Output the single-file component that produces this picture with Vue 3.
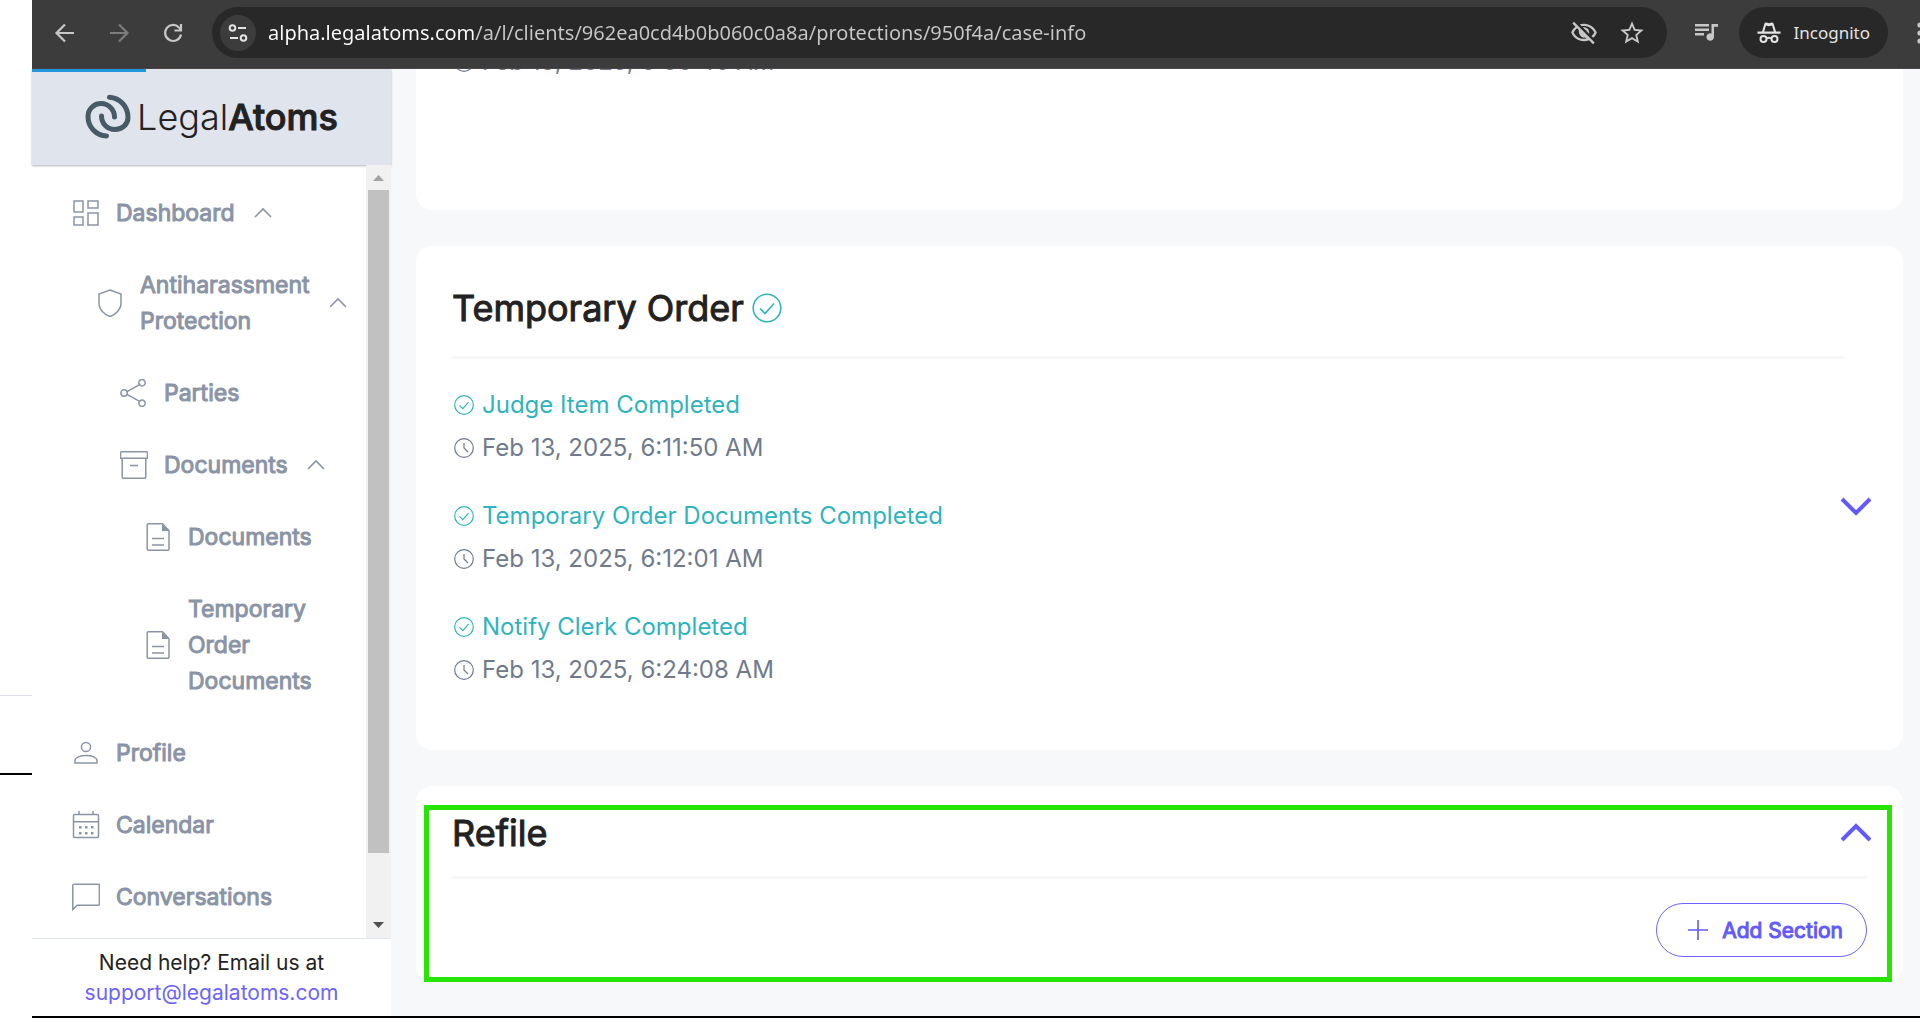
<script setup>
import { computed, ref } from 'vue'

const address = ref('alpha.legalatoms.com/a/l/clients/962ea0cd4b0b060c0a8a/protections/950f4a/case-info')

const navItems = [
  { id: 'dashboard', label: 'Dashboard', icon: 'grid', level: 0, expandable: true },
  { id: 'antiharassment', label: 'Antiharassment Protection', icon: 'shield', level: 1, expandable: true, parent: 'dashboard' },
  { id: 'parties', label: 'Parties', icon: 'share', level: 2, parent: 'antiharassment' },
  { id: 'documents', label: 'Documents', icon: 'archive', level: 2, expandable: true, parent: 'antiharassment' },
  { id: 'all-documents', label: 'Documents', icon: 'file', level: 3, parent: 'documents' },
  { id: 'temporary-order', label: 'Temporary Order Documents', icon: 'file', level: 3, parent: 'documents' },
  { id: 'profile', label: 'Profile', icon: 'user', level: 0 },
  { id: 'calendar', label: 'Calendar', icon: 'calendar', level: 0 },
  { id: 'conversations', label: 'Conversations', icon: 'chat', level: 0 }
]

const collapsed = ref([])

const isHidden = (item) => {
  if (!item.parent) return false
  if (collapsed.value.includes(item.parent)) return true
  return isHidden(navItems.find((other) => other.id === item.parent))
}

const visibleItems = computed(() => navItems.filter((item) => !isHidden(item)))

const toggleItem = (item) => {
  if (!item.expandable) return
  collapsed.value = collapsed.value.includes(item.id)
    ? collapsed.value.filter((id) => id !== item.id)
    : [...collapsed.value, item.id]
}

const steps = [
  { title: 'Judge Item Completed', date: 'Feb 13, 2025, 6:11:50 AM' },
  { title: 'Temporary Order Documents Completed', date: 'Feb 13, 2025, 6:12:01 AM' },
  { title: 'Notify Clerk Completed', date: 'Feb 13, 2025, 6:24:08 AM' }
]

// 28x28 stroke icons for the sidebar
const iconPaths = {
  grid: 'M2 2h9v11h-9z M16 2h10v7h-10z M2 18h9v8h-9z M16 14h10v12h-10z',
  shield: 'M14 1 L25 5 V14 C25 21 19 26 14 27.500 C9 26 3 21 3 14 V5 Z',
  share: 'M7.500 12.300 L20.500 5.200 M7.500 15.600 L20.500 22.800 M7.300 14a3.200 3.200 0 1 1-6.400 0a3.200 3.200 0 1 1 6.400 0 M25.200 3.700a3.200 3.200 0 1 1-6.400 0a3.200 3.200 0 1 1 6.400 0 M25.200 24.300a3.200 3.200 0 1 1-6.400 0a3.200 3.200 0 1 1 6.400 0',
  archive: 'M1.500 .700h25a1 1 0 0 1 1 1v5.600h-27v-5.600a1 1 0 0 1 1-1z M2.200 7.300v18.500a1.500 1.500 0 0 0 1.500 1.500h20.600a1.500 1.500 0 0 0 1.500-1.500v-18.500 M10 14.500h8',
  file: 'M4.500 .700h14l6.500 7v18.300a1.300 1.300 0 0 1-1.300 1.300h-19.200a1.300 1.300 0 0 1-1.300-1.300v-24a1.300 1.300 0 0 1 1.300-1.300z M8 15.500h12 M8 22h12',
  user: 'M18.600 8a4.600 4.600 0 1 1-9.200 0a4.600 4.600 0 1 1 9.200 0 M3 24v-2.500c0-3 5-5 11-5s11 2 11 5v2.500z',
  calendar: 'M2.500 3.500h23a1 1 0 0 1 1 1v21a1 1 0 0 1-1 1h-23a1 1 0 0 1-1-1v-21a1 1 0 0 1 1-1z M1.500 10.700h25 M7 0v3.500 M21 0v3.500',
  chat: 'M.800 26.500v-24a1.300 1.300 0 0 1 1.300-1.300h24a1.300 1.300 0 0 1 1.300 1.300v18.500a1.300 1.300 0 0 1-1.300 1.300h-21z'
}
</script>

<template>
  <div class="page">
    <div class="gutter">
      <span class="gutter-line thin"></span>
      <span class="gutter-line thick"></span>
    </div>

    <div class="window">
      <header class="browser-bar">
        <div class="bar-group">
          <button class="bar-btn" aria-label="Back">
            <svg viewBox="0 0 28 28"><path d="M23 14H6M14 5.500L5.500 14l8.500 8.500" /></svg>
          </button>
          <button class="bar-btn dim" aria-label="Forward">
            <svg viewBox="0 0 28 28"><path d="M5 14h17M14 5.500l8.500 8.500-8.500 8.500" /></svg>
          </button>
          <button class="bar-btn" aria-label="Reload">
            <svg viewBox="0 0 28 28"><path d="M22 15.500A8 8 0 1 1 20 8.500L22 10.500M22 5v6.500H15.500" /></svg>
          </button>
        </div>

        <div class="address">
          <button class="site-info" aria-label="Site information">
            <svg viewBox="0 0 36 36">
              <circle cx="12.500" cy="13" r="2.800" />
              <path d="M18 13h8M10 23h8" />
              <circle cx="23.500" cy="23" r="2.800" />
            </svg>
          </button>
          <input v-model="address" class="url" aria-label="Address" spellcheck="false" />
          <button class="bar-btn solid" aria-label="Third-party cookies blocked">
            <svg viewBox="0 0 24 24"><path d="M12 6c3.790 0 7.170 2.130 8.820 5.500-.590 1.220-1.420 2.270-2.410 3.120l1.410 1.410c1.390-1.230 2.490-2.770 3.180-4.530C21.270 7.110 17 4 12 4c-1.270 0-2.490.200-3.640.570l1.650 1.650C10.660 6.090 11.320 6 12 6zm-1.070 1.140L13 9.210c.570.250 1.030.710 1.280 1.280l2.070 2.070c.080-.340.140-.700.140-1.070C16.500 9.010 14.480 7 12 7c-.370 0-.720.050-1.070.140zM2.010 3.870l2.680 2.680C3.060 7.830 1.770 9.530 1 11.500 2.730 15.890 7 19 12 19c1.520 0 2.980-.290 4.320-.820l3.420 3.420 1.410-1.410L3.420 2.450 2.010 3.870zM12 17c-3.790 0-7.170-2.130-8.820-5.500.700-1.430 1.720-2.610 2.930-3.530l1.480 1.480c-.060.330-.090.690-.090 1.050 0 2.480 2.020 5.500 4.500 5.500.360 0 .720-.030 1.050-.100l.940.940C13.340 16.940 12.680 17 12 17z" /></svg>
          </button>
          <button class="bar-btn solid" aria-label="Bookmark">
            <svg viewBox="0 0 24 24"><path d="M22 9.240l-7.190-.620L12 2 9.190 8.630 2 9.240l5.460 4.730L5.820 21 12 17.270 18.180 21l-1.630-7.030L22 9.240zM12 15.400l-3.760 2.270 1-4.280-3.320-2.880 4.380-.380L12 6.100l1.710 4.040 4.380.380-3.320 2.880 1 4.280L12 15.400z" /></svg>
          </button>
        </div>

        <div class="bar-group right">
          <button class="bar-btn solid" aria-label="Media controls">
            <svg viewBox="0 0 28 28"><path d="M2 5h14v2.400H2zM2 9.500h14v2.400H2zM2 14h9v2.400H2zM18.500 5H25v2.800h-4V18a3.800 3.800 0 1 1-2.500-3.500z" /></svg>
          </button>
          <button class="incognito">
            <svg viewBox="0 0 24 24">
              <path class="hat" d="M7.500 2.500C8 1.300 9 1.300 12 2.300 15 1.300 16 1.300 16.500 2.500L19 10.500H23.500V12.700H.500V10.500H5zM9 4.500L7.200 10.500H16.800L15 4.500 12 5.300z" />
              <circle cx="6.500" cy="18" r="3" />
              <circle cx="17.500" cy="18" r="3" />
              <path d="M9.500 17.500Q12 16 14.500 17.500" />
            </svg>
            Incognito
          </button>
          <button class="kebab" aria-label="More">
            <svg viewBox="0 0 14 28">
              <circle cx="14" cy="6" r="2.600" />
              <circle cx="14" cy="14" r="2.600" />
              <circle cx="14" cy="22" r="2.600" />
            </svg>
          </button>
        </div>
      </header>

      <div class="app">
        <aside class="sidebar">
          <span class="progress"></span>
          <a class="brand" href="#">
            <svg viewBox="0 0 46 46">
              <path d="M24.500 3.200C35 4 43 12.500 43 23.500 43 30.500 37 35.500 30 35.500 22.500 35.500 16.500 30 16.500 22" />
              <path d="M21.500 42C11 41.500 3 33 3 22.500 3 15 9 9.500 16 9.500 23.500 9.500 29.500 15.500 29.500 23" />
            </svg>
            <span class="brand-name">Legal<b>Atoms</b></span>
          </a>

          <div class="nav-wrap">
            <nav class="nav">
              <component
                :is="item.expandable ? 'button' : 'a'"
                v-for="item in visibleItems"
                :key="item.id"
                :href="item.expandable ? null : `#${item.id}`"
                class="nav-item"
                :class="`level-${item.level}`"
                @click="toggleItem(item)"
              >
                <svg class="nav-icon" viewBox="0 0 28 28">
                  <path :d="iconPaths[item.icon]" />
                  <path v-if="item.icon === 'file'" class="filled" d="M18 1v7h7z" />
                  <path
                    v-if="item.icon === 'calendar'"
                    class="filled"
                    d="M7 15h2.500v2.500H7zM13 15h2.500v2.500H13zM19 15h2.500v2.500H19zM7 21h2.500v2.500H7zM13 21h2.500v2.500H13zM19 21h2.500v2.500H19z"
                  />
                </svg>
                <span class="nav-label">{{ item.label }}</span>
                <svg
                  v-if="item.expandable"
                  class="nav-chevron"
                  :class="{ closed: collapsed.includes(item.id) }"
                  viewBox="0 0 18 18"
                >
                  <path d="M1 13l8-8 8 8" />
                </svg>
              </component>
            </nav>
            <div class="scrollbar" aria-hidden="true">
              <svg class="arrow up" viewBox="0 0 25 25"><path d="M7 16l5.500-6 5.500 6z" /></svg>
              <div class="scroll-track"><div class="thumb"></div></div>
              <svg class="arrow down" viewBox="0 0 25 25"><path d="M7 9l5.500 6 5.500-6z" /></svg>
            </div>
          </div>

          <footer class="help">
            Need help? Email us at
            <a href="mailto:support@legalatoms.com">support@legalatoms.com</a>
          </footer>
        </aside>

        <main class="content">
          <section class="card previous">
            <p class="step-date">
              <svg class="step-icon" viewBox="0 0 20 20"><circle cx="10" cy="10" r="9.300" /><path d="M10 5v5l4 4" /></svg>
              Feb 13, 2025, 6:06:46 AM
            </p>
          </section>

          <section class="card order">
            <div class="card-body">
              <h2>
                Temporary Order
                <svg class="title-icon" viewBox="0 0 30 30"><circle cx="15" cy="15" r="13.800" /><path d="M8 15.500l5 5 9-10" /></svg>
              </h2>
              <hr />
              <div class="steps">
                <div v-for="step in steps" :key="step.title">
                  <p class="step-title">
                    <svg class="step-icon" viewBox="0 0 20 20"><circle cx="10" cy="10" r="9.300" /><path d="M5.500 10.300l3.300 3.300 5.700-6.500" /></svg>
                    {{ step.title }}
                  </p>
                  <p class="step-date">
                    <svg class="step-icon" viewBox="0 0 20 20"><circle cx="10" cy="10" r="9.300" /><path d="M10 5v5l4 4" /></svg>
                    {{ step.date }}
                  </p>
                </div>
              </div>
            </div>
            <button class="expand" aria-label="Expand Temporary Order">
              <svg viewBox="0 0 32 20"><path d="M2 3l14 14 14-14" /></svg>
            </button>
          </section>

          <section class="card refile">
            <div class="card-head">
              <h2>Refile</h2>
              <button class="expand" aria-label="Collapse Refile">
                <svg viewBox="0 0 32 20"><path d="M2 17l14-14 14 14" /></svg>
              </button>
            </div>
            <hr />
            <button class="add-btn">
              <svg viewBox="0 0 20 20"><path d="M10 0v20M0 10h20" /></svg>
              Add Section
            </button>
            <div class="highlight"></div>
          </section>
        </main>
      </div>
    </div>
  </div>
</template>

<style>
body {
  margin: 0;
  background: #fff;
}
</style>

<style scoped>
* {
  box-sizing: border-box;
}

.page {
  display: flex;
  height: 100vh;
  font-family: Inter, "Liberation Sans", sans-serif;
  color: #222;
  background: #fff;
}

button {
  padding: 0;
  border: none;
  background: none;
  font: inherit;
  cursor: pointer;
}

a {
  text-decoration: none;
}

svg {
  display: block;
  flex: none;
  fill: none;
  stroke: currentColor;
}

.gutter {
  display: flex;
  flex-direction: column;
  justify-content: flex-end;
  width: 32px;
  flex: none;
  padding-bottom: 243px;
}

.gutter-line.thin {
  height: 1px;
  margin-bottom: 77px;
  background: #dfe1ea;
}

.gutter-line.thick {
  height: 2px;
  background: #000;
}

.window {
  flex: 1;
  min-width: 0;
  display: flex;
  flex-direction: column;
  border-bottom: 2px solid #000;
}

.browser-bar {
  display: flex;
  align-items: center;
  gap: 26px;
  height: 69px;
  flex: none;
  padding: 0 0 3px 19px;
  background: #3c3c3c;
  border-bottom: 1px solid #4a4649;
}

.bar-group {
  display: flex;
  align-items: center;
  gap: 26px;
}

.bar-group.right {
  gap: 18px;
}

.bar-btn {
  color: #c7c7c7;
}

.bar-btn svg {
  width: 28px;
  height: 28px;
  stroke-width: 2.2;
}

.bar-btn.dim {
  color: #7c7c7c;
}

.bar-btn.solid svg {
  fill: currentColor;
  stroke: none;
}

.address {
  flex: 1;
  min-width: 0;
  display: flex;
  align-items: center;
  gap: 20px;
  height: 51px;
  margin-left: -1px;
  padding: 0 21px 0 8px;
  border-radius: 26px;
  background: #282828;
}

.site-info {
  border-radius: 50%;
  background: #3c3c3c;
  color: #e3e3e3;
}

.site-info svg {
  width: 36px;
  height: 36px;
  stroke-width: 2;
}

.url {
  flex: 1;
  min-width: 0;
  margin-left: -8px;
  padding: 0;
  border: none;
  outline: none;
  font-family: "Noto Sans", "Open Sans", sans-serif;
  font-size: 20px;
  line-height: 28px;
  color: transparent;
  background: linear-gradient(to right, #fff 206px, #c7c7c7 206px);
  background-clip: text;
}

.incognito {
  display: flex;
  align-items: center;
  gap: 13px;
  height: 51px;
  padding: 0 18px;
  border-radius: 26px;
  background: #282828;
  color: #e3e3e3;
  font-family: "Noto Sans", "Open Sans", sans-serif;
  font-size: 17px;
}

.incognito svg {
  width: 24px;
  height: 24px;
  stroke-width: 2;
}

.incognito .hat {
  fill: currentColor;
  fill-rule: evenodd;
  stroke: none;
}

.kebab {
  color: #c7c7c7;
}

.kebab svg {
  width: 14px;
  height: 28px;
  fill: currentColor;
  stroke: none;
}

.app {
  flex: 1;
  min-height: 0;
  display: flex;
}

.sidebar {
  position: relative;
  display: flex;
  flex-direction: column;
  width: 359px;
  flex: none;
  background: #fff;
}

.progress {
  position: absolute;
  top: 0;
  left: 0;
  width: 114px;
  height: 3px;
  background: #2196dd;
}

.brand {
  display: flex;
  align-items: center;
  justify-content: center;
  gap: 6px;
  height: 96px;
  flex: none;
  background: #e0e4ec;
  box-shadow: 0 1px 2px rgba(0, 0, 0, 0.3);
  color: #222;
}

.brand svg {
  width: 46px;
  height: 46px;
  stroke: #475b66;
  stroke-width: 5;
  stroke-linecap: round;
}

.brand-name {
  font-size: 36px;
  line-height: 44px;
  font-weight: 300;
}

.brand-name b {
  font-weight: 500;
  -webkit-text-stroke: 1px currentColor;
}

.nav-wrap {
  flex: 1;
  min-height: 0;
  display: flex;
}

.nav {
  flex: 1;
  min-width: 0;
  overflow: hidden;
  padding-top: 12px;
}

.nav-item {
  display: flex;
  align-items: center;
  width: 100%;
  padding: 18px 24px 18px 40px;
  color: #8a94a6;
  font-size: 23px;
  line-height: 36px;
  font-weight: 400;
  text-align: left;
}

.nav-label {
  -webkit-text-stroke: 1px currentColor;
}

.nav-item.level-1 {
  padding-left: 64px;
}

.nav-item.level-2 {
  padding-left: 88px;
}

.nav-item.level-3 {
  padding-left: 112px;
}

.nav-icon {
  width: 28px;
  height: 28px;
  margin-right: 16px;
  stroke-width: 1.5;
}

.filled {
  fill: currentColor;
  stroke: none;
}

.nav-chevron {
  width: 18px;
  height: 18px;
  margin-left: 19px;
  stroke-width: 1.6;
}

.nav-chevron.closed {
  transform: rotate(180deg);
}

.scrollbar {
  position: relative;
  display: flex;
  flex-direction: column;
  width: 25px;
  flex: none;
  background: #f1f1f1;
}

.arrow {
  width: 25px;
  height: 25px;
  stroke: none;
}

.arrow.up {
  fill: #a3a3a3;
}

.arrow.down {
  fill: #505050;
}

.scroll-track {
  flex: 1;
  display: grid;
  grid-template-rows: 11fr 1fr;
  padding: 0 2px;
}

.thumb {
  background: #c1c1c1;
}

.help {
  flex: none;
  padding: 9px 0 8px;
  border-top: 1px solid #dfe6ee;
  font-size: 21px;
  line-height: 30px;
  text-align: center;
}

.help a {
  display: block;
  color: #6c63ff;
}

/* the column is scrolled to its end, so cards stack up from the bottom */
.content {
  flex: 1;
  min-width: 0;
  display: flex;
  flex-direction: column;
  justify-content: flex-end;
  gap: 36px;
  padding: 0 17px 34px 25px;
  overflow: hidden;
  background: #f7f8fa;
}

.card {
  flex: none;
  border-radius: 16px;
  background: #fff;
}

.card.previous {
  padding: 40px 58px 128px 36px;
}

.card.order {
  display: flex;
  align-items: center;
  padding: 40px 31px 24px 36px;
}

.card.refile {
  position: relative;
  display: flex;
  flex-direction: column;
  padding: 25px 36px;
}

.card-body {
  flex: 1;
  min-width: 0;
  padding-bottom: 36px;
}

.card-head {
  display: flex;
  align-items: center;
  justify-content: space-between;
}

h2 {
  display: flex;
  align-items: center;
  gap: 8px;
  margin: 0;
  font-size: 36px;
  line-height: 44px;
  font-weight: 400;
  -webkit-text-stroke: 1px currentColor;
}

.title-icon {
  width: 30px;
  height: 30px;
  color: #2fb4bf;
  stroke-width: 1.6;
}

hr {
  width: 100%;
  height: 3px;
  margin: 26px 0 23px;
  border: none;
  background: #f6f7f9;
}

.refile hr {
  margin: 21px 0 24px;
}

.steps {
  display: flex;
  flex-direction: column;
  gap: 25px;
}

.step-title,
.step-date {
  display: flex;
  align-items: center;
  gap: 8px;
  margin: 0;
  font-size: 24px;
}

.step-title {
  line-height: 46px;
  color: #2fb4bf;
}

.step-date {
  line-height: 40px;
  color: #6f7a8c;
}

.step-icon {
  width: 20px;
  height: 20px;
  margin-left: 2px;
  stroke-width: 1.2;
}

.expand {
  margin-left: -5px;
  color: #6259ff;
}

.refile .expand {
  margin-right: -5px;
}

.expand svg {
  width: 32px;
  height: 20px;
  stroke-width: 4;
}

.add-btn {
  display: flex;
  align-items: center;
  gap: 14px;
  align-self: flex-end;
  height: 54px;
  padding: 0 23px 0 31px;
  border: 1px solid #6c63ff;
  border-radius: 27px;
  color: #6259ff;
  font-size: 21px;
  font-weight: 400;
  -webkit-text-stroke: 1px currentColor;
}

.add-btn svg {
  width: 20px;
  height: 20px;
  stroke-width: 1.6;
}

.highlight {
  position: absolute;
  inset: 19px 11px 0 8px;
  border: 5px solid #26e600;
  pointer-events: none;
}
</style>
